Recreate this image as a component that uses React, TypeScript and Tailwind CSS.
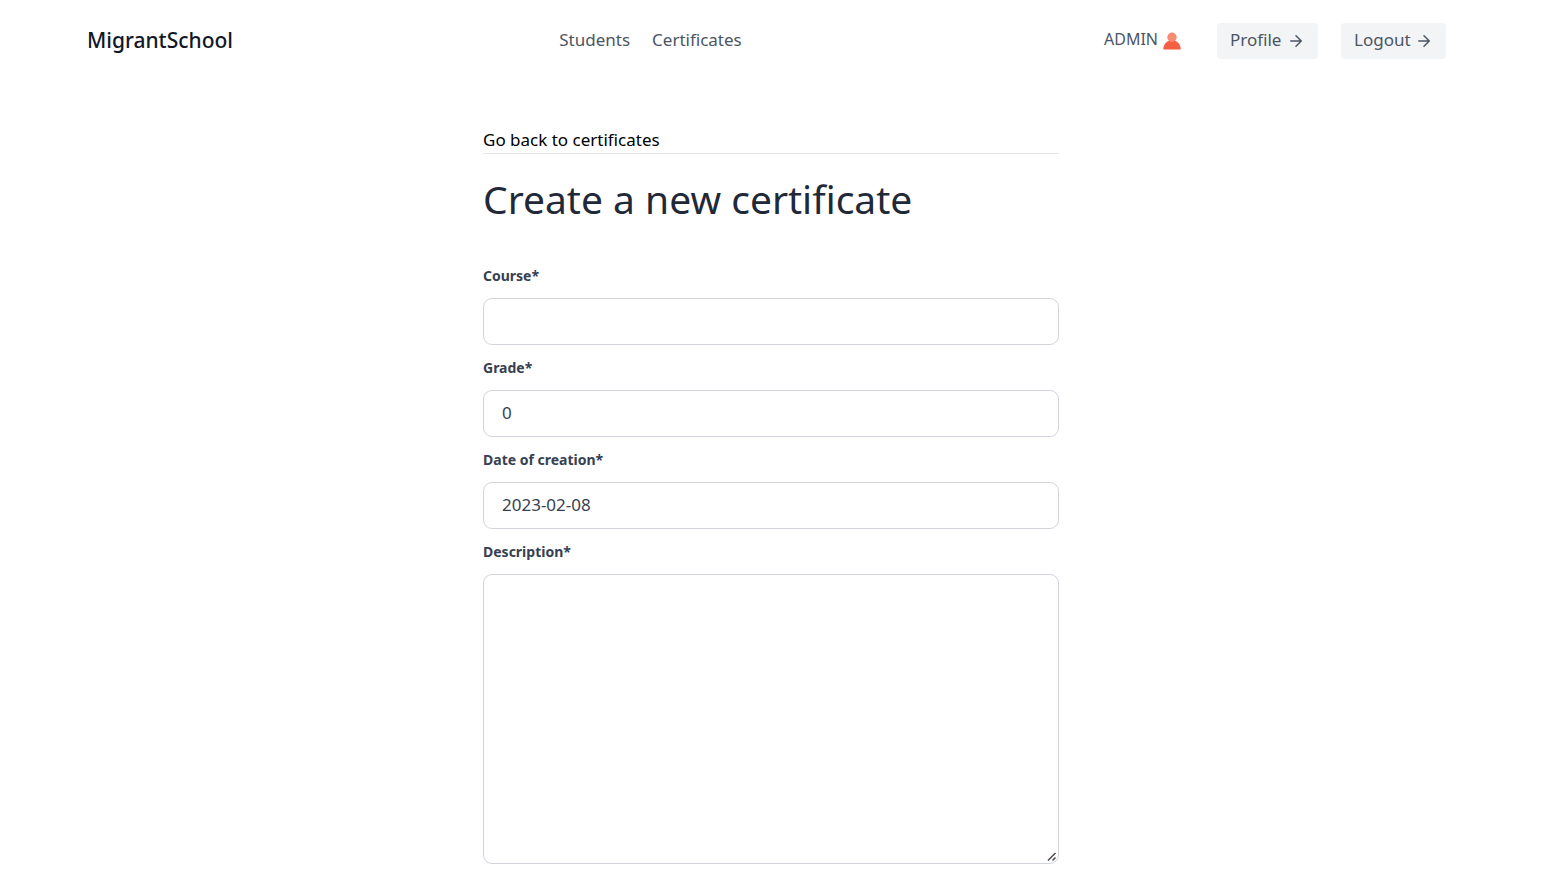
import type { ReactNode } from "react";

function Arrow() {
  return (
    <svg
      className="size-[18px] shrink-0"
      viewBox="0 0 24 24"
      fill="none"
      stroke="currentColor"
      strokeWidth="2"
      strokeLinecap="round"
      strokeLinejoin="round"
      aria-hidden="true"
    >
      <path d="M5 12h14M12 5l7 7-7 7" />
    </svg>
  );
}

function Person() {
  return (
    <svg className="size-[18px]" viewBox="0 0 18 18" aria-hidden="true">
      <path d="M0.3 17.4C0.3 12 3.8 8.6 9 8.6s8.700 3.400 8.700 8.800z" fill="#f55f44" />
      <circle cx="9" cy="5.200" r="4.700" fill="#f98c70" />
    </svg>
  );
}

function HeaderButton({ className, children }: { className: string; children: ReactNode }) {
  return (
    <button
      type="button"
      className={`flex h-9 items-center justify-between rounded bg-gray-100 pr-[13px] pl-[13px] text-[17px] leading-[27px] text-[#4b5563] ${className}`}
    >
      <span className="pb-1">{children}</span>
      <Arrow />
    </button>
  );
}

function Field({ id, label, value }: { id: string; label: string; value?: string }) {
  return (
    <div className="flex flex-col">
      <label htmlFor={id} className="mb-[10px] text-[14px] leading-6 font-bold text-[#374151]">
        {label}
      </label>
      <input
        id={id}
        type="text"
        defaultValue={value}
        className="h-[47px] w-full rounded-[9px] border border-[#d1d5db] bg-white px-[18px] pb-0.5 text-[17px] text-[#374151]"
      />
    </div>
  );
}

export default function App() {
  return (
    <div className="min-h-screen bg-white pr-[11px] font-['Noto_Sans',sans-serif]">
      <header className="mx-auto flex max-w-[1440px] items-center py-[23px] pr-[45px] pl-9 text-[#4b5563]">
        <a href="#" className="pb-0.5 text-[21px] leading-7 font-medium text-[#111827]">
          MigrantSchool
        </a>
        <nav className="mx-auto flex gap-[22px] pr-9 pb-1 text-[17px] leading-[27px]">
          <a href="#students">Students</a>
          <a href="#certificates">Certificates</a>
        </nav>
        <div className="mr-9 flex items-center gap-[5px] text-[16px] leading-[27px]">
          <span className="pb-1">ADMIN</span>
          <Person />
        </div>
        <div className="flex gap-[23px]">
          <HeaderButton className="w-[101px]">Profile</HeaderButton>
          <HeaderButton className="w-[105px]">Logout</HeaderButton>
        </div>
      </header>

      <main className="mx-auto max-w-xl pt-11 pb-[7px]">
        <div className="border-b border-gray-200 text-[17px] leading-[27px] text-black">
          <a href="#certificates">Go back to certificates</a>
        </div>
        <h1 className="mt-5 text-[39px] leading-[50px] text-[#1f2937]">Create a new certificate</h1>
        <form className="mt-10 flex flex-col gap-[11px]">
          <Field id="course" label="Course*" />
          <Field id="grade" label="Grade*" value="0" />
          <Field id="date" label="Date of creation*" value="2023-02-08" />
          <div className="flex flex-col">
            <label htmlFor="description" className="mb-[10px] text-[14px] leading-6 font-bold text-[#374151]">
              Description*
            </label>
            <div className="relative flex">
              <textarea
                id="description"
                className="h-[290px] w-full resize-none rounded-[9px] border border-[#d1d5db] bg-white px-[18px] py-2 text-[17px] text-[#374151]"
              />
              <svg
                className="pointer-events-none absolute right-0.5 bottom-0.5 size-[10px]"
                viewBox="0 0 10 10"
                fill="none"
                stroke="#4a4a4a"
                strokeWidth="1.500"
                aria-hidden="true"
              >
                <path d="M1 8.500L8.500 1M5.500 8.500L8.500 5.500" />
              </svg>
            </div>
          </div>
        </form>
      </main>
    </div>
  );
}
